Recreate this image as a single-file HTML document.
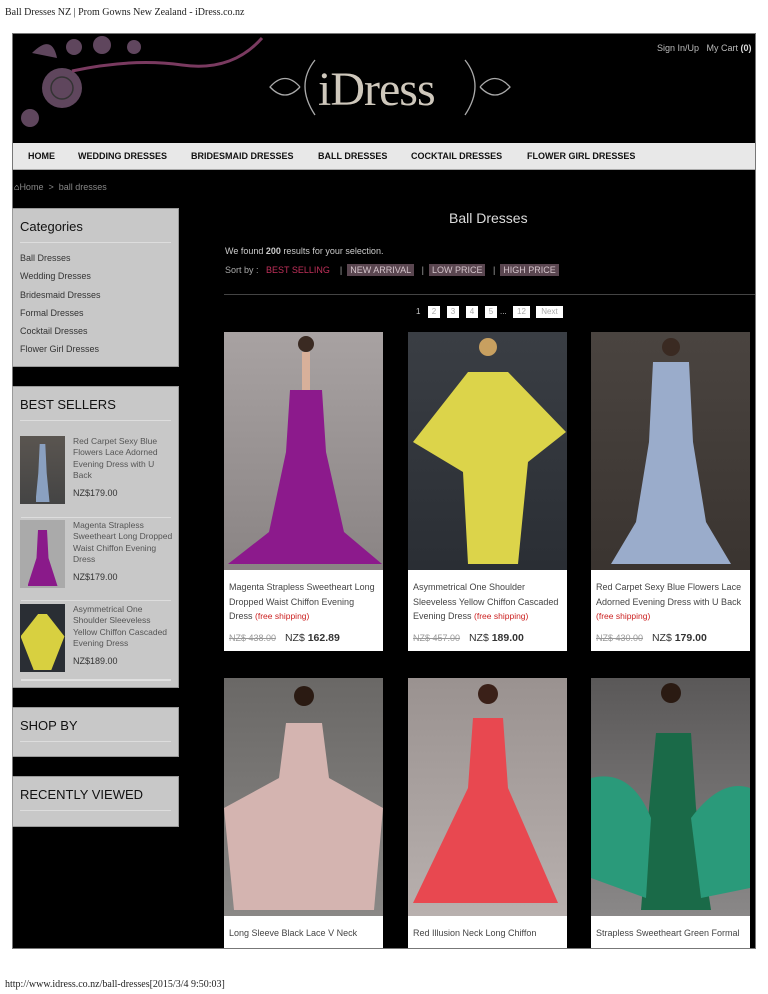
<!DOCTYPE html>
<html><head><meta charset="utf-8"><style>
*{margin:0;padding:0;box-sizing:border-box}
body{width:768px;height:994px;background:#fff;position:relative;font-family:"Liberation Sans",sans-serif;overflow:hidden}
.a{position:absolute}
.serif{font-family:"Liberation Serif",serif}
.box{position:absolute;left:12px;width:167px;background:#c8c8c8;border:1px solid #999}
.box h3{font-weight:normal;font-size:13px;color:#111;margin:10px 7px 0;padding-bottom:8px;border-bottom:1px solid #ddd}
.cat{font-size:9px;color:#333;margin-left:7px;line-height:18.3px}
.bs{position:absolute;left:7px;width:152px;height:70px}
.bs .t{position:absolute;left:0;top:0;width:45px;height:68px}
.bs .x{position:absolute;left:53px;top:0;font-size:8.5px;color:#555;line-height:11.3px;width:100px}
.bs .p{position:absolute;left:53px;font-size:9px;color:#333}
.card{position:absolute;width:159px;background:#fff}
.img{position:absolute;left:0;top:0;width:159px;height:238px}
.ct{position:absolute;left:5px;top:248px;font-size:9px;color:#444;line-height:14.5px;width:150px}
.fs{color:#c22;font-size:8.5px}
.pr{position:absolute;left:5px;top:300px;font-size:10.5px;color:#333}
.pr s{color:#999;font-size:9px;margin-right:6px}
.nav span{position:absolute;top:151px;font-size:9px;font-weight:bold;color:#111}
.pg{position:absolute;top:306px;height:12px;background:#fff;font-size:8px;color:#aaa;text-align:center;line-height:12px}
.srt{background:#5a4650;color:#d5c5cc;padding:1px 3px}
</style></head><body>
<div class="a serif" style="left:5px;top:7px;font-size:10px;color:#222">Ball Dresses NZ | Prom Gowns New Zealand - iDress.co.nz</div>
<div class="a" style="left:12px;top:33px;width:744px;height:916px;background:#000;border:1px solid #777"></div>
<svg class="a" style="left:12px;top:33px" width="280" height="110">
<g fill="#6a4e68" opacity=".9"><circle cx="50" cy="55" r="20"/><circle cx="18" cy="85" r="9"/><circle cx="62" cy="14" r="8"/><circle cx="90" cy="12" r="9"/><circle cx="122" cy="14" r="7"/><path d="M20 20 Q40 0 45 25Z"/></g>
<path d="M60 38 Q120 25 170 32 T250 5" stroke="#7a3a60" stroke-width="3" fill="none"/>
<circle cx="50" cy="55" r="11" fill="none" stroke="#333" stroke-width="1.5"/>
</svg>
<div class="a serif" style="left:318px;top:62px;font-size:48px;color:#cfc8bc;letter-spacing:-1px">iDress</div>
<svg class="a" style="left:265px;top:55px" width="250" height="65"><g stroke="#aaa" fill="none" stroke-width="1.3"><path d="M35 32 Q20 15 5 32 Q20 48 35 32 M50 5 Q30 30 50 60"/><path d="M215 32 Q230 15 245 32 Q230 48 215 32 M200 5 Q220 30 200 60"/></g></svg>
<div class="a" style="left:657px;top:43px;font-size:9px;color:#bbb">Sign In/Up &nbsp; My Cart <b style="color:#ddd">(0)</b></div>
<div class="a" style="left:13px;top:143px;width:742px;height:27px;background:#e8e8e8;border-bottom:1px solid #aaa"></div>
<div class="nav"><span style="left:28px">HOME</span><span style="left:78px">WEDDING DRESSES</span><span style="left:191px">BRIDESMAID DRESSES</span><span style="left:318px">BALL DRESSES</span><span style="left:411px">COCKTAIL DRESSES</span><span style="left:527px">FLOWER GIRL DRESSES</span></div>
<div class="a" style="left:14px;top:182px;font-size:9px;color:#888"><span style="color:#ccc">&#8962;</span>Home &nbsp;&gt;&nbsp; ball dresses</div>

<div class="box" style="top:208px;height:159px"><h3>Categories</h3><div style="height:6px"></div>
<div class="cat">Ball Dresses</div><div class="cat">Wedding Dresses</div><div class="cat">Bridesmaid Dresses</div><div class="cat">Formal Dresses</div><div class="cat">Cocktail Dresses</div><div class="cat">Flower Girl Dresses</div></div>

<div class="box" style="top:386px;height:302px"><h3 style="text-transform:uppercase">BEST SELLERS</h3>
<div class="bs" style="top:49px"><div class="t" style="background:linear-gradient(#5a5550,#444);"><div style="margin:8px auto 0;width:14px;height:58px;background:#8aa0c0;clip-path:polygon(30% 0,70% 0,80% 50%,100% 100%,0 100%,20% 50%)"></div></div><div class="x">Red Carpet Sexy Blue Flowers Lace Adorned Evening Dress with U Back</div><div class="p" style="top:52px">NZ$179.00</div></div>
<div class="a" style="left:8px;top:130px;width:150px;border-top:1px solid #ddd"></div>
<div class="bs" style="top:133px"><div class="t" style="background:#aaa"><div style="margin:10px auto 0;width:30px;height:56px;background:#8a1a8a;clip-path:polygon(35% 0,65% 0,70% 50%,100% 100%,0 100%,30% 50%)"></div></div><div class="x">Magenta Strapless Sweetheart Long Dropped Waist Chiffon Evening Dress</div><div class="p" style="top:52px">NZ$179.00</div></div>
<div class="a" style="left:8px;top:213px;width:150px;border-top:1px solid #ddd"></div>
<div class="bs" style="top:217px"><div class="t" style="background:#2a2e34"><div style="margin:10px auto 0;width:44px;height:56px;background:#d8d040;clip-path:polygon(40% 0,60% 0,100% 40%,70% 100%,30% 100%,0 40%)"></div></div><div class="x">Asymmetrical One Shoulder Sleeveless Yellow Chiffon Cascaded Evening Dress</div><div class="p" style="top:52px">NZ$189.00</div></div>
<div class="a" style="left:8px;top:292px;width:150px;border-top:2px solid #e0e0e0"></div>
</div>
<div class="box" style="top:707px;height:50px"><h3>SHOP BY</h3></div>
<div class="box" style="top:776px;height:51px"><h3>RECENTLY VIEWED</h3></div>

<div class="a" style="left:449px;top:210px;font-size:14px;color:#ddd">Ball Dresses</div>
<div class="a" style="left:225px;top:246px;font-size:9px;color:#ccc">We found <b>200</b> results for your selection.</div>
<div class="a" style="left:225px;top:265px;font-size:9px;color:#aaa">Sort by : &nbsp; <span style="color:#c0305a">BEST SELLING</span> &nbsp;&nbsp; | &nbsp;<span class="srt">NEW ARRIVAL</span> &nbsp; | &nbsp;<span class="srt">LOW PRICE</span> &nbsp; | &nbsp;<span class="srt">HIGH PRICE</span></div>
<div class="a" style="left:224px;top:294px;width:531px;border-top:1px solid #444"></div>
<div class="a" style="left:416px;top:307px;font-size:8px;color:#ccc">1</div>
<div class="pg" style="left:428px;width:12px">2</div><div class="pg" style="left:447px;width:12px">3</div><div class="pg" style="left:466px;width:12px">4</div><div class="pg" style="left:485px;width:12px">5</div>
<div class="a" style="left:500px;top:307px;font-size:8px;color:#ccc">...</div>
<div class="pg" style="left:513px;width:17px">12</div><div class="pg" style="left:536px;width:27px">Next</div>

<div class="card" style="left:224px;top:332px;height:319px"><div class="img" style="background:linear-gradient(#a8a2a2,#8a8484)"><svg width="159" height="238"><circle cx="82" cy="12" r="8" fill="#3a2a22"/><path d="M78 20h8v40h-8z" fill="#d8b09a"/><path d="M66 58 L98 58 L102 120 L120 200 L158 232 L4 232 L45 200 L62 120Z" fill="#8c1a8c"/></svg></div>
<div class="ct">Magenta Strapless Sweetheart Long Dropped Waist Chiffon Evening Dress <span class="fs">(free shipping)</span></div><div class="pr"><s>NZ$ 438.00</s> NZ$ <b>162.89</b></div></div>

<div class="card" style="left:408px;top:332px;height:319px"><div class="img" style="background:linear-gradient(#3a3e44,#2a2e34)"><svg width="159" height="238"><circle cx="80" cy="15" r="9" fill="#c8a060"/><path d="M60 40 L100 40 L158 100 L120 130 L110 232 L60 232 L55 140 L5 110 Z" fill="#dcd44a"/></svg></div>
<div class="ct">Asymmetrical One Shoulder Sleeveless Yellow Chiffon Cascaded Evening Dress <span class="fs">(free shipping)</span></div><div class="pr"><s>NZ$ 457.00</s> NZ$ <b>189.00</b></div></div>

<div class="card" style="left:591px;top:332px;height:319px"><div class="img" style="background:linear-gradient(#4a4440,#3a3430)"><svg width="159" height="238"><circle cx="80" cy="15" r="9" fill="#3a2a22"/><path d="M62 30 L98 30 L102 110 L115 190 L140 232 L20 232 L45 190 L58 110Z" fill="#9aaccb"/></svg></div>
<div class="ct">Red Carpet Sexy Blue Flowers Lace Adorned Evening Dress with U Back <span class="fs">(free shipping)</span></div><div class="pr"><s>NZ$ 430.00</s> NZ$ <b>179.00</b></div></div>

<div class="card" style="left:224px;top:678px;height:270px"><div class="img" style="background:linear-gradient(#6a6866,#8a8886)"><svg width="159" height="238"><circle cx="80" cy="18" r="10" fill="#2a1a12"/><path d="M62 45 L98 45 L105 100 L159 130 L150 232 L10 232 L0 130 L55 100Z" fill="#d4b4b0"/></svg></div>
<div class="ct" style="top:248px">Long Sleeve Black Lace V Neck</div></div>

<div class="card" style="left:408px;top:678px;height:270px"><div class="img" style="background:linear-gradient(#9a9290,#b8b0ae)"><svg width="159" height="238"><circle cx="80" cy="16" r="10" fill="#3a2018"/><path d="M65 40 L95 40 L100 110 L150 225 L5 225 L60 110Z" fill="#e84850"/></svg></div>
<div class="ct" style="top:248px">Red Illusion Neck Long Chiffon</div></div>

<div class="card" style="left:591px;top:678px;height:270px"><div class="img" style="background:linear-gradient(#5a5858,#8a8888)"><svg width="159" height="238"><circle cx="80" cy="15" r="10" fill="#2a1a12"/><path d="M65 55 L100 55 L105 130 L120 232 L50 232 L58 130Z" fill="#1a6a48"/><path d="M0 100 Q40 90 60 140 L55 220 L0 200Z M100 140 Q130 100 159 110 L159 210 L110 220Z" fill="#2a9a7a"/></svg></div>
<div class="ct" style="top:248px">Strapless Sweetheart Green Formal</div></div>

<div class="a serif" style="left:5px;top:979px;font-size:10px;color:#222">http://www.idress.co.nz/ball-dresses[2015/3/4 9:50:03]</div>
</body></html>
